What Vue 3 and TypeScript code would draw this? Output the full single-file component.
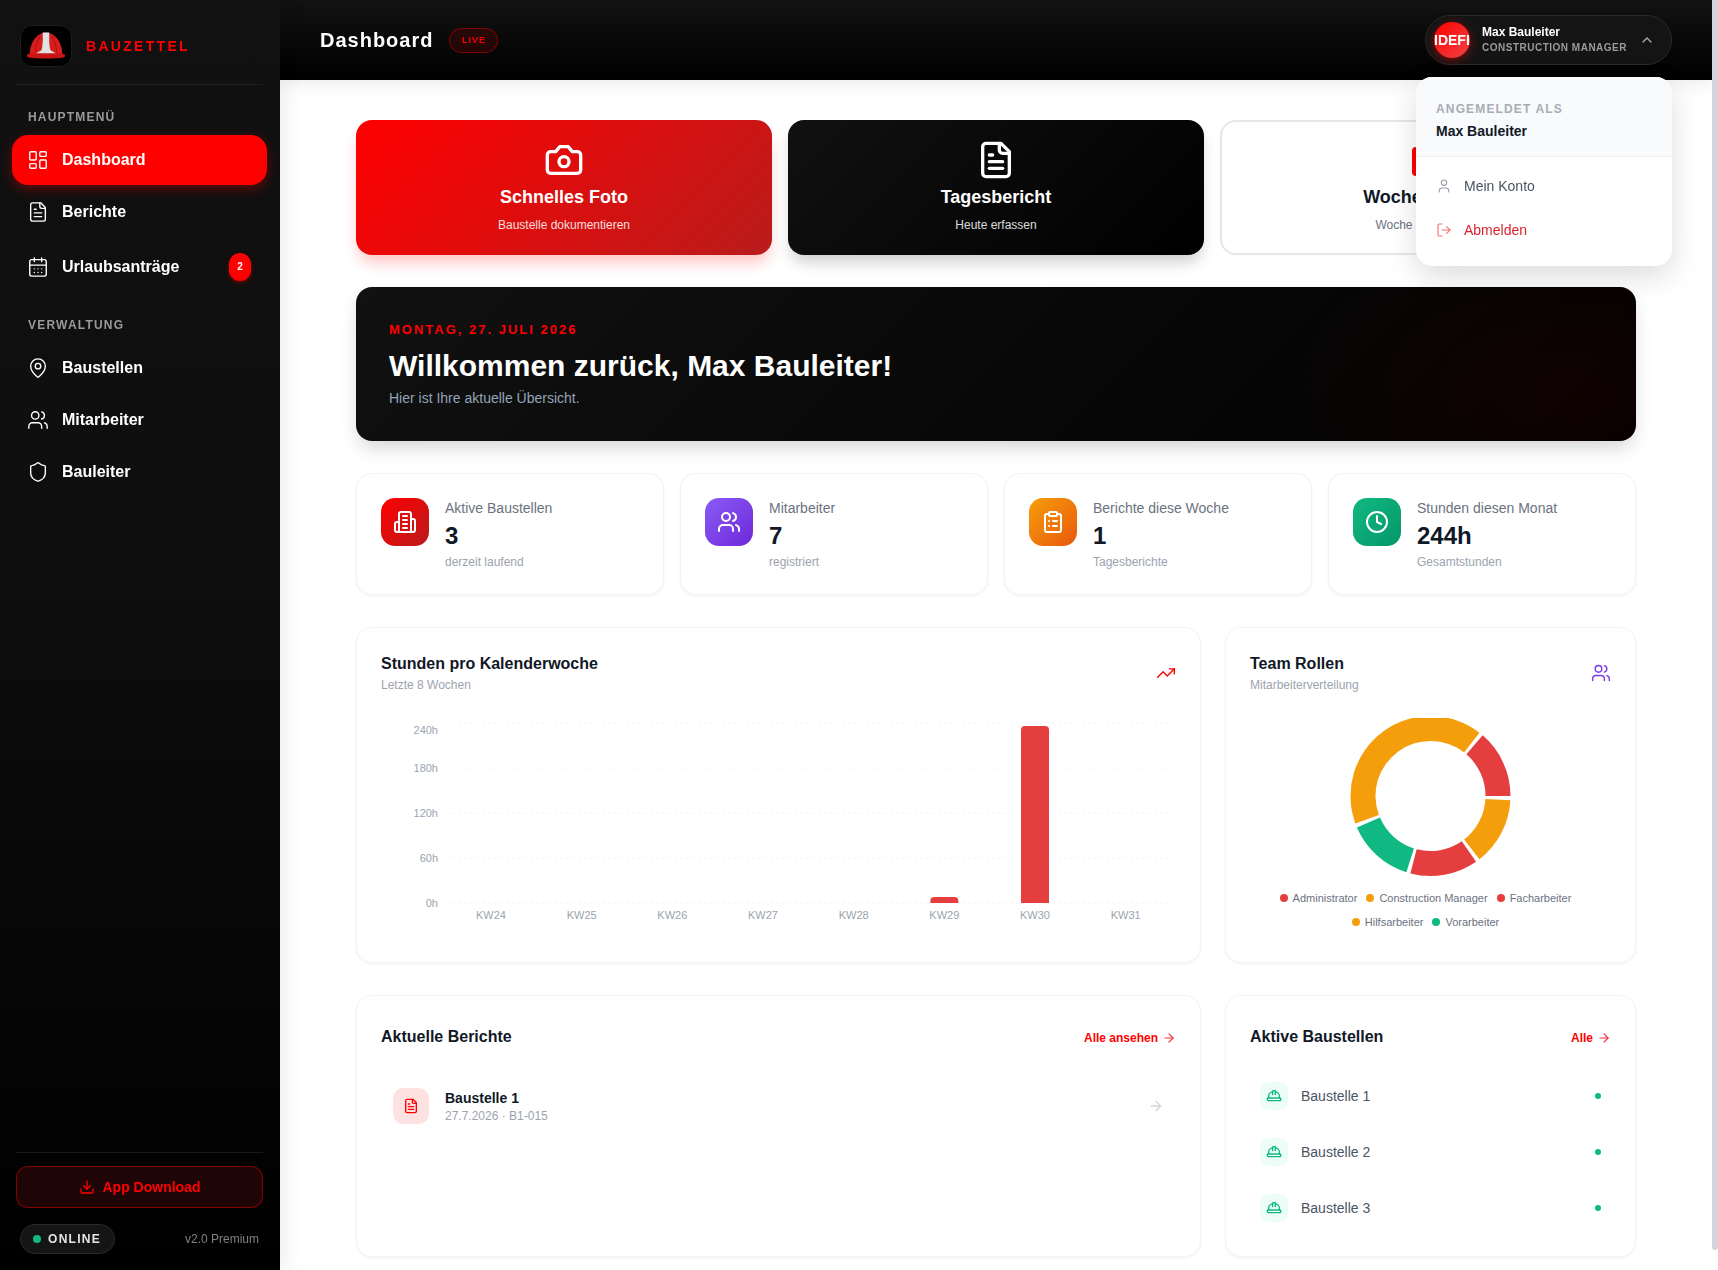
<script setup lang="ts">
import { h, type FunctionalComponent } from 'vue'

const circle = (cx: number, cy: number, r: number) => `M${cx - r} ${cy}a${r} ${r} 0 1 0 ${2 * r} 0a${r} ${r} 0 1 0 ${-2 * r} 0`
const rect = (x: number, y: number, w: number, ht: number, r: number) =>
  `M${x + r} ${y}h${w - 2 * r}a${r} ${r} 0 0 1 ${r} ${r}v${ht - 2 * r}a${r} ${r} 0 0 1 ${-r} ${r}h${-(w - 2 * r)}a${r} ${r} 0 0 1 ${-r} ${-r}v${-(ht - 2 * r)}a${r} ${r} 0 0 1 ${r} ${-r}z`

const icons: Record<string, string[]> = {
  dashboard: [rect(3, 3, 7, 9, 1), rect(14, 3, 7, 5, 1), rect(14, 12, 7, 9, 1), rect(3, 16, 7, 5, 1)],
  file: ['M15 2H6a2 2 0 0 0-2 2v16a2 2 0 0 0 2 2h12a2 2 0 0 0 2-2V7Z', 'M14 2v4a2 2 0 0 0 2 2h4', 'M10 9H8', 'M16 13H8', 'M16 17H8'],
  calendar: ['M8 2v4', 'M16 2v4', rect(3, 4, 18, 18, 2), 'M3 10h18', 'M8 14h.01', 'M12 14h.01', 'M16 14h.01', 'M8 18h.01', 'M12 18h.01', 'M16 18h.01'],
  pin: ['M20 10c0 4.993-5.539 10.193-7.399 11.799a1 1 0 0 1-1.202 0C9.539 20.193 4 14.993 4 10a8 8 0 0 1 16 0', circle(12, 10, 3)],
  users: ['M16 21v-2a4 4 0 0 0-4-4H6a4 4 0 0 0-4 4v2', circle(9, 7, 4), 'M22 21v-2a4 4 0 0 0-3-3.87', 'M16 3.13a4 4 0 0 1 0 7.75'],
  shield: ['M20 13c0 5-3.5 7.5-7.66 8.95a1 1 0 0 1-.67-.01C7.5 20.5 4 18 4 13V6a1 1 0 0 1 1-1c2 0 4.5-1.2 6.24-2.72a1.17 1.17 0 0 1 1.52 0C14.51 3.81 17 5 19 5a1 1 0 0 1 1 1z'],
  download: ['M21 15v4a2 2 0 0 1-2 2H5a2 2 0 0 1-2-2v-4', 'M7 10l5 5 5-5', 'M12 15V3'],
  chevron: ['m18 15-6-6-6 6'],
  camera: ['M14.5 4h-5L7 7H4a2 2 0 0 0-2 2v9a2 2 0 0 0 2 2h16a2 2 0 0 0 2-2V9a2 2 0 0 0-2-2h-3l-2.5-3z', circle(12, 13, 3)],
  user: ['M19 21v-2a4 4 0 0 0-4-4H9a4 4 0 0 0-4 4v2', circle(12, 7, 4)],
  logout: ['M9 21H5a2 2 0 0 1-2-2V5a2 2 0 0 1 2-2h4', 'M16 17l5-5-5-5', 'M21 12H9'],
  building: ['M6 22V4a2 2 0 0 1 2-2h8a2 2 0 0 1 2 2v18Z', 'M6 12H4a2 2 0 0 0-2 2v6a2 2 0 0 0 2 2h2', 'M18 9h2a2 2 0 0 1 2 2v9a2 2 0 0 1-2 2h-2', 'M10 6h4', 'M10 10h4', 'M10 14h4', 'M10 18h4'],
  clipboard: [rect(8, 2, 8, 4, 1), 'M16 4h2a2 2 0 0 1 2 2v14a2 2 0 0 1-2 2H6a2 2 0 0 1-2-2V6a2 2 0 0 1 2-2h2', 'M12 11h4', 'M12 16h4', 'M8 11h.01', 'M8 16h.01'],
  clock: [circle(12, 12, 10), 'M12 6v6l4 2'],
  trending: ['M22 7l-8.5 8.5-5-5L2 17', 'M16 7h6v6'],
  arrow: ['M5 12h14', 'm12 5 7 7-7 7'],
  hardhat: ['M2 18a1 1 0 0 0 1 1h18a1 1 0 0 0 1-1v-2a1 1 0 0 0-1-1H3a1 1 0 0 0-1 1v2z', 'M10 10V5a1 1 0 0 1 1-1h2a1 1 0 0 1 1 1v5', 'M4 15v-3a6 6 0 0 1 6-6', 'M14 6a6 6 0 0 1 6 6v3'],
}

const Ico: FunctionalComponent<{ name: string }> = (props) =>
  h(
    'svg',
    { viewBox: '0 0 24 24', fill: 'none', stroke: 'currentColor', 'stroke-linecap': 'round', 'stroke-linejoin': 'round' },
    icons[props.name].map((d) => h('path', { d })),
  )

const mainNav = [
  { label: 'Dashboard', icon: 'dashboard', active: true },
  { label: 'Berichte', icon: 'file' },
  { label: 'Urlaubsanträge', icon: 'calendar', badge: 2 },
]
const adminNav = [
  { label: 'Baustellen', icon: 'pin' },
  { label: 'Mitarbeiter', icon: 'users' },
  { label: 'Bauleiter', icon: 'shield' },
]

const stats = [
  { label: 'Aktive Baustellen', value: '3', sub: 'derzeit laufend', icon: 'building', tone: 'red' },
  { label: 'Mitarbeiter', value: '7', sub: 'registriert', icon: 'users', tone: 'purple' },
  { label: 'Berichte diese Woche', value: '1', sub: 'Tagesberichte', icon: 'clipboard', tone: 'orange' },
  { label: 'Stunden diesen Monat', value: '244h', sub: 'Gesamtstunden', icon: 'clock', tone: 'green' },
]

const gridLines = [
  { y: 14, ly: 21, label: '240h' },
  { y: 59, ly: 59, label: '180h' },
  { y: 104, ly: 104, label: '120h' },
  { y: 149, ly: 149, label: '60h' },
  { y: 194, ly: 194, label: '0h' },
]
const weeks = [
  { kw: 'KW24', top: 194 },
  { kw: 'KW25', top: 194 },
  { kw: 'KW26', top: 194 },
  { kw: 'KW27', top: 194 },
  { kw: 'KW28', top: 194 },
  { kw: 'KW29', top: 188 },
  { kw: 'KW30', top: 17 },
  { kw: 'KW31', top: 194 },
]
const weekX = (i: number) => 110 + 90.67 * i
const barPath = (cx: number, top: number) => {
  const r = Math.min(4, 194 - top)
  return `M${cx - 14} 194V${top + r}Q${cx - 14} ${top} ${cx - 14 + r} ${top}H${cx + 14 - r}Q${cx + 14} ${top} ${cx + 14} ${top + r}V194Z`
}

// donut runs counter-clockwise from 3 o'clock, 3 degrees between slices
const slices = [
  { share: 1, color: '#e53e3e' },
  { share: 3, color: '#f59e0b' },
  { share: 1, color: '#10b981' },
  { share: 1, color: '#e53e3e' },
  { share: 1, color: '#f59e0b' },
]
const unit = (360 - 3 * slices.length) / 7
const arc = (from: number, to: number) => {
  const [cx, cy, R, r] = [80.5, 78, 80, 55]
  const pt = (rad: number, a: number) => `${(cx + rad * Math.cos((a * Math.PI) / 180)).toFixed(2)} ${(cy - rad * Math.sin((a * Math.PI) / 180)).toFixed(2)}`
  const big = to - from > 180 ? 1 : 0
  return `M${pt(R, from)}A${R} ${R} 0 ${big} 0 ${pt(R, to)}L${pt(r, to)}A${r} ${r} 0 ${big} 1 ${pt(r, from)}Z`
}
let angle = 0
const donut = slices.map((s) => {
  const d = arc(angle, angle + s.share * unit)
  angle += s.share * unit + 3
  return { d, color: s.color }
})
const legend = [
  { label: 'Administrator', color: '#e53e3e' },
  { label: 'Construction Manager', color: '#f59e0b' },
  { label: 'Facharbeiter', color: '#e53e3e' },
  { label: 'Hilfsarbeiter', color: '#f59e0b' },
  { label: 'Vorarbeiter', color: '#10b981' },
]
const sites = ['Baustelle 1', 'Baustelle 2', 'Baustelle 3']
</script>

<template>
  <div class="app">
    <aside class="sidebar">
      <div class="brand">
        <div class="logo">
          <svg viewBox="0 0 52 42" width="52" height="42">
            <path d="M9 30a17 23 0 0 1 34 0z" fill="#d91c1c" />
            <path d="M15 28c0-7 2-13 5-17M37 28c0-7-2-13-5-17" stroke="#a81212" stroke-width="1" fill="none" />
            <path d="M7 29.500c6-1.500 32-1.500 38 0 1.500 1.500 1 3-1 3.500-8 1.500-28 1.500-36 0-2-.5-2.500-2-1-3.500z" fill="#c81414" />
            <path d="M22.500 7h7c-.5 7 0 14 1 18 1 1.500 3.500 2.500 6 3.500H15.500c2.500-1 5-2 6-3.500 1-4 1.500-11 1-18z" fill="#dfe1e3" />
          </svg>
        </div>
        <span class="brand-name">BAUZETTEL</span>
      </div>

      <div class="nav-title first">HAUPTMENÜ</div>
      <nav class="nav tight">
        <a v-for="item in mainNav" :key="item.label" class="nav-item" :class="{ active: item.active }">
          <Ico :name="item.icon" class="nav-icon" />
          <span>{{ item.label }}</span>
          <span v-if="item.badge" class="badge">{{ item.badge }}</span>
        </a>
      </nav>

      <div class="nav-title second">VERWALTUNG</div>
      <nav class="nav">
        <a v-for="item in adminNav" :key="item.label" class="nav-item">
          <Ico :name="item.icon" class="nav-icon" />
          <span>{{ item.label }}</span>
        </a>
      </nav>

      <div class="side-foot">
        <button class="download">
          <Ico name="download" class="download-icon" />
          App Download
        </button>
        <div class="foot-row">
          <span class="online"><i></i>ONLINE</span>
          <span class="version">v2.0 Premium</span>
        </div>
      </div>
    </aside>

    <div class="content">
      <header class="topbar">
        <div class="top-left">
          <h1>Dashboard</h1>
          <span class="live">LIVE</span>
        </div>
        <div class="user-wrap">
          <div class="user-pill">
            <div class="avatar">IDEFI</div>
            <div class="user-text">
              <strong>Max Bauleiter</strong>
              <small>CONSTRUCTION MANAGER</small>
            </div>
            <Ico name="chevron" class="chev" />
          </div>
          <div class="dropdown">
            <div class="drop-head">
              <small>ANGEMELDET ALS</small>
              <strong>Max Bauleiter</strong>
            </div>
            <div class="drop-list">
              <a class="drop-item"><Ico name="user" class="drop-icon muted" />Mein Konto</a>
              <a class="drop-item danger"><Ico name="logout" class="drop-icon" />Abmelden</a>
            </div>
          </div>
        </div>
      </header>

      <main class="main">
        <section class="quick">
          <div class="quick-card red">
            <Ico name="camera" class="quick-icon" />
            <h3>Schnelles Foto</h3>
            <p>Baustelle dokumentieren</p>
          </div>
          <div class="quick-card black">
            <Ico name="file" class="quick-icon" />
            <h3>Tagesbericht</h3>
            <p>Heute erfassen</p>
          </div>
          <div class="quick-card light">
            <div class="quick-block"></div>
            <h3>Wochenbericht</h3>
            <p>Woche abschließen</p>
          </div>
        </section>

        <section class="welcome">
          <div class="welcome-date">MONTAG, 27. JULI 2026</div>
          <h2>Willkommen zurück, Max Bauleiter!</h2>
          <p>Hier ist Ihre aktuelle Übersicht.</p>
        </section>

        <section class="stats">
          <div v-for="s in stats" :key="s.label" class="stat card">
            <div class="stat-icon" :class="s.tone"><Ico :name="s.icon" /></div>
            <div>
              <div class="stat-label">{{ s.label }}</div>
              <div class="stat-value">{{ s.value }}</div>
              <div class="stat-sub">{{ s.sub }}</div>
            </div>
          </div>
        </section>

        <section class="split charts">
          <div class="card panel">
            <div class="panel-head">
              <div>
                <h3>Stunden pro Kalenderwoche</h3>
                <p>Letzte 8 Wochen</p>
              </div>
              <Ico name="trending" class="head-icon red-text" />
            </div>
            <svg class="bars" width="795" height="229">
              <g v-for="g in gridLines" :key="g.label">
                <line x1="65" x2="789" :y1="g.y" :y2="g.y" stroke="#f3f4f6" stroke-dasharray="3 3" />
                <text x="57" :y="g.ly + 3.5" text-anchor="end">{{ g.label }}</text>
              </g>
              <g v-for="(w, i) in weeks" :key="w.kw">
                <path v-if="w.top < 194" :d="barPath(weekX(i), w.top)" fill="#e53e3e" />
                <text :x="weekX(i)" y="210" text-anchor="middle">{{ w.kw }}</text>
              </g>
            </svg>
          </div>

          <div class="card panel">
            <div class="panel-head">
              <div>
                <h3>Team Rollen</h3>
                <p>Mitarbeiterverteilung</p>
              </div>
              <Ico name="users" class="head-icon purple-text" />
            </div>
            <svg class="donut" width="162" height="161">
              <path v-for="(p, i) in donut" :key="i" :d="p.d" :fill="p.color" />
            </svg>
            <div class="legend">
              <span v-for="l in legend" :key="l.label"><i :style="{ background: l.color }"></i>{{ l.label }}</span>
            </div>
          </div>
        </section>

        <section class="split lists">
          <div class="card panel">
            <div class="list-head">
              <h3>Aktuelle Berichte</h3>
              <a class="more">Alle ansehen <Ico name="arrow" class="more-icon" /></a>
            </div>
            <div class="report">
              <div class="report-icon"><Ico name="file" /></div>
              <div class="report-text">
                <strong>Baustelle 1</strong>
                <small>27.7.2026 · B1-015</small>
              </div>
              <Ico name="arrow" class="report-arrow" />
            </div>
          </div>

          <div class="card panel">
            <div class="list-head">
              <h3>Aktive Baustellen</h3>
              <a class="more">Alle <Ico name="arrow" class="more-icon" /></a>
            </div>
            <div class="sites">
              <div v-for="site in sites" :key="site" class="site">
                <div class="site-icon"><Ico name="hardhat" /></div>
                <span>{{ site }}</span>
                <i class="site-dot"></i>
              </div>
            </div>
          </div>
        </section>
      </main>
    </div>

    <div class="scrollbar"><div class="thumb"></div></div>
  </div>
</template>

<style>
html {
  background: #fff;
}
</style>

<style scoped>
* {
  box-sizing: border-box;
}
.app {
  display: flex;
  height: 100vh;
  overflow: hidden;
  font-family: "Liberation Sans", Arial, sans-serif;
  color: #111827;
}
h1, h2, h3, p {
  margin: 0;
}
.scrollbar {
  flex: 0 0 6px;
  position: relative;
  z-index: 40;
  background: #fff;
}
.thumb {
  height: 1250px;
  border-radius: 0 0 3px 3px;
  background: #d1d5db;
}

/* sidebar */
.sidebar {
  position: relative;
  z-index: 30;
  flex: 0 0 280px;
  height: 100vh;
  display: flex;
  flex-direction: column;
  padding: 25px 13px 0 12px;
  background: linear-gradient(180deg, #111 0%, #0e0e0e 45%, #000 100%);
  box-shadow: 4px 0 20px rgba(0, 0, 0, 0.08);
}
.brand {
  display: flex;
  align-items: center;
  gap: 14px;
  margin: 0 4px;
  padding: 0 4px 17px;
  border-bottom: 1px solid #1f1f1f;
}
.logo {
  width: 52px;
  height: 42px;
  border-radius: 12px;
  background: #000;
  border: 1px solid #1c1c1c;
  display: flex;
  align-items: center;
  justify-content: center;
}
.brand-name {
  color: #f00;
  font-size: 14px;
  font-weight: 700;
  letter-spacing: 2.3px;
}
.nav-title {
  padding-left: 16px;
  color: #9a9a9a;
  font-size: 12px;
  font-weight: 700;
  letter-spacing: 1.2px;
  line-height: 14px;
}
.nav-title.first {
  margin-top: 25px;
  margin-bottom: 11px;
}
.nav-title.second {
  margin-top: 23px;
  margin-bottom: 12px;
}
.nav {
  display: flex;
  flex-direction: column;
  gap: 4px;
}
.nav.tight {
  gap: 3px;
}
.nav-item {
  display: flex;
  align-items: center;
  gap: 13px;
  min-height: 48px;
  padding: 0 15px;
  border-radius: 16px;
  color: #fff;
  font-size: 16px;
  font-weight: 700;
}
.nav-item.active {
  min-height: 50px;
  background: #f00;
  box-shadow: 0 4px 12px rgba(255, 0, 0, 0.35);
}
.nav-icon {
  width: 22px;
  height: 22px;
  stroke-width: 1.5;
  flex: none;
}
.badge {
  margin: 14px 1px 14px auto;
  width: 22px;
  height: 28px;
  border-radius: 11px;
  background: #f00;
  box-shadow: 0 2px 4px rgba(255, 0, 0, 0.35);
  font-size: 10px;
  line-height: 28px;
  text-align: center;
}
.side-foot {
  margin-top: auto;
  margin-inline: 4px;
  padding-top: 13px;
  padding-bottom: 16px;
  border-top: 1px solid #1a1a1a;
}
.download {
  width: 100%;
  height: 42px;
  display: flex;
  align-items: center;
  justify-content: center;
  gap: 8px;
  border: 1px solid rgba(255, 0, 0, 0.45);
  border-radius: 12px;
  background: #1f0505;
  color: #f00;
  font-family: inherit;
  font-size: 14px;
  font-weight: 700;
}
.download-icon {
  width: 16px;
  height: 16px;
  stroke-width: 2;
}
.foot-row {
  display: flex;
  align-items: center;
  justify-content: space-between;
  margin-top: 16px;
  padding: 0 4px;
}
.online {
  display: flex;
  align-items: center;
  gap: 7px;
  height: 30px;
  padding: 0 13px 0 12px;
  border: 1px solid #2a2a2a;
  border-radius: 15px;
  background: #151515;
  color: #e5e5e5;
  font-size: 12px;
  font-weight: 700;
  letter-spacing: 1.3px;
}
.online i {
  width: 8px;
  height: 8px;
  border-radius: 50%;
  background: #10b981;
}
.version {
  color: #808080;
  font-size: 12px;
}

/* top bar stays put while the content column scrolls */
.content {
  flex: 1;
  min-width: 0;
  height: 100vh;
  overflow-y: auto;
  scrollbar-width: none;
}
.topbar {
  position: sticky;
  top: 0;
  z-index: 20;
  height: 80px;
  display: flex;
  align-items: center;
  justify-content: space-between;
  padding: 0 40px;
  background: linear-gradient(180deg, #121212 0%, #000 100%);
  box-shadow: 0 4px 16px rgba(0, 0, 0, 0.08);
}
.top-left {
  display: flex;
  align-items: center;
  gap: 16px;
}
.topbar h1 {
  color: #fff;
  font-size: 20px;
  font-weight: 700;
  letter-spacing: 1px;
}
.live {
  width: 49px;
  height: 25px;
  border-radius: 13px;
  border: 1px solid rgba(255, 0, 0, 0.4);
  background: rgba(255, 0, 0, 0.12);
  color: #f00;
  font-size: 9px;
  font-weight: 700;
  letter-spacing: 1px;
  line-height: 23px;
  text-align: center;
}
.user-wrap {
  position: relative;
}
.user-pill {
  width: 247px;
  height: 50px;
  display: flex;
  align-items: center;
  padding: 0 16px 0 8px;
  border: 1px solid #2a2a2a;
  border-radius: 25px;
  background: #141414;
}
.avatar {
  width: 36px;
  height: 36px;
  flex: none;
  border-radius: 50%;
  background: linear-gradient(135deg, #f00, #ef4444);
  box-shadow: 0 2px 10px rgba(255, 0, 0, 0.5);
  color: #fff;
  font-size: 14px;
  font-weight: 700;
  line-height: 36px;
  white-space: nowrap;
  overflow: hidden;
}
.user-text {
  display: flex;
  flex-direction: column;
  margin-left: 12px;
  padding-bottom: 2px;
  flex: 1;
}
.user-text strong {
  color: #fff;
  font-size: 12px;
  line-height: 16px;
}
.user-text small {
  color: #9a9a9a;
  font-size: 10px;
  font-weight: 700;
  letter-spacing: 0.5px;
  line-height: 15px;
}
.chev {
  width: 16px;
  height: 16px;
  stroke-width: 2;
  color: #aaa;
}
.dropdown {
  position: absolute;
  top: 62px;
  right: 0;
  width: 256px;
  height: 189px;
  border-radius: 16px;
  background: #fff;
  box-shadow: 0 10px 30px rgba(0, 0, 0, 0.14);
  overflow: hidden;
}
.drop-head {
  height: 80px;
  padding: 24px 20px 0;
  background: #f9fafb;
  border-bottom: 1px solid #f0f1f3;
  display: flex;
  flex-direction: column;
}
.drop-head small {
  color: #a8acb5;
  font-size: 12px;
  font-weight: 700;
  letter-spacing: 1.15px;
  line-height: 16px;
}
.drop-head strong {
  margin-top: 6px;
  color: #111827;
  font-size: 14px;
  line-height: 16px;
}
.drop-list {
  padding: 7px 0;
}
.drop-item {
  display: flex;
  align-items: center;
  gap: 12px;
  height: 44px;
  padding: 0 20px;
  color: #4b5563;
  font-size: 14px;
}
.drop-item.danger {
  color: #dc1f2e;
}
.drop-icon {
  width: 16px;
  height: 16px;
  stroke-width: 1.7;
}
.drop-icon.muted {
  color: #9ca3af;
}
.danger .drop-icon {
  color: #f87171;
}

/* main column */
.main {
  max-width: 1280px;
  margin: 0 auto;
  padding: 40px 0 32px;
  display: flex;
  flex-direction: column;
}
.quick {
  display: grid;
  grid-template-columns: repeat(3, 1fr);
  gap: 16px;
}
.quick-card {
  height: 135px;
  border-radius: 16px;
  padding-top: 20px;
  display: flex;
  flex-direction: column;
  align-items: center;
  text-align: center;
}
.quick-card.red {
  background: linear-gradient(135deg, #f00 0%, #b91c1c 100%);
  color: #fff;
  box-shadow: 0 10px 15px -3px rgba(255, 0, 0, 0.25);
}
.quick-card.black {
  background: linear-gradient(135deg, #111 0%, #000 100%);
  color: #fff;
  box-shadow: 0 10px 15px -3px rgba(0, 0, 0, 0.2);
}
.quick-card.light {
  background: #fff;
  border: 2px solid #e5e7eb;
  padding-top: 18px;
  color: #111827;
}
.quick-icon {
  width: 40px;
  height: 40px;
  stroke-width: 2;
}
.quick-block {
  width: 32px;
  height: 29px;
  margin-top: 7px;
  margin-bottom: 4px;
  border-radius: 4px;
  background: #f00;
}
.quick-card h3 {
  margin-top: 3px;
  font-size: 18px;
  line-height: 28px;
  font-weight: 700;
}
.quick-card p {
  margin-top: 6px;
  font-size: 12px;
  line-height: 16px;
  opacity: 0.85;
}
.quick-card.light p {
  color: #6b7280;
  opacity: 1;
}
.welcome {
  margin-top: 32px;
  height: 154px;
  padding: 33px 33px 0;
  border-radius: 16px;
  background:
    radial-gradient(ellipse 300px 180px at 95% 70%, rgba(150, 0, 0, 0.1), transparent 100%),
    linear-gradient(135deg, #111 0%, #000 100%);
  box-shadow: 0 10px 20px -4px rgba(0, 0, 0, 0.18);
}
.welcome-date {
  color: #f00;
  font-size: 13px;
  font-weight: 700;
  letter-spacing: 2px;
  line-height: 20px;
}
.welcome h2 {
  margin-top: 8px;
  color: #fff;
  font-size: 30px;
  line-height: 36px;
  font-weight: 700;
}
.welcome p {
  margin-top: 4px;
  color: #94a3b8;
  font-size: 14px;
  line-height: 20px;
}
.card {
  background: #fff;
  border: 1px solid #f3f4f6;
  border-radius: 16px;
  box-shadow: 0 1px 3px rgba(0, 0, 0, 0.05);
}
.stats {
  margin-top: 32px;
  display: grid;
  grid-template-columns: repeat(4, 1fr);
  grid-auto-rows: 122px;
  gap: 16px;
}
.stat {
  display: flex;
  gap: 16px;
  padding: 24px;
}
.stat-icon {
  width: 48px;
  height: 48px;
  flex: none;
  border-radius: 14px;
  display: flex;
  align-items: center;
  justify-content: center;
  color: #fff;
}
.stat-icon svg {
  width: 24px;
  height: 24px;
  stroke-width: 2;
}
.stat-icon.red {
  background: linear-gradient(135deg, #f00, #b91c1c);
}
.stat-icon.purple {
  background: linear-gradient(135deg, #8b5cf6, #6d28d9);
}
.stat-icon.orange {
  background: linear-gradient(135deg, #f59e0b, #ea580c);
}
.stat-icon.green {
  background: linear-gradient(135deg, #10b981, #059669);
}
.stat-label {
  color: #6b7280;
  font-size: 14px;
  line-height: 20px;
}
.stat-value {
  margin-top: 2px;
  color: #111827;
  font-size: 24px;
  font-weight: 700;
  line-height: 32px;
}
.stat-sub {
  margin-top: 2px;
  color: #9ca3af;
  font-size: 12px;
  line-height: 16px;
}
.split {
  display: grid;
  grid-template-columns: 1fr 411px;
  gap: 24px;
}
.charts {
  margin-top: 32px;
  grid-auto-rows: 336px;
}
.lists {
  margin-top: 32px;
  grid-auto-rows: 262px;
}
.panel {
  padding: 24px;
}
.panel-head {
  display: flex;
  justify-content: space-between;
  align-items: flex-start;
}
.panel h3 {
  font-size: 16px;
  line-height: 24px;
  font-weight: 700;
  color: #111827;
}
.panel-head p {
  margin-top: 1px;
  color: #9ca3af;
  font-size: 12px;
  line-height: 16px;
}
.head-icon {
  width: 20px;
  height: 20px;
  margin-top: 11px;
  stroke-width: 1.7;
}
.red-text {
  color: #f00;
}
.purple-text {
  color: #7c3aed;
}
.bars {
  display: block;
  margin-top: 16px;
}
.bars text {
  fill: #9ca3af;
  font-size: 11px;
}
.donut {
  display: block;
  margin: 25px auto 0;
}
.legend {
  display: flex;
  flex-wrap: wrap;
  justify-content: center;
  gap: 8px 9px;
  margin: 11px 10px 0 0;
  color: #6b7280;
  font-size: 11px;
  line-height: 16px;
}
.legend span {
  display: flex;
  align-items: center;
  gap: 5px;
}
.legend i {
  width: 8px;
  height: 8px;
  border-radius: 50%;
}
.list-head {
  display: flex;
  align-items: center;
  justify-content: space-between;
  height: 34px;
}
.more {
  display: flex;
  align-items: center;
  gap: 4px;
  margin-top: 2px;
  color: #f00;
  font-size: 12px;
  font-weight: 700;
}
.more-icon {
  width: 14px;
  height: 14px;
  stroke-width: 2;
  color: #f6323e;
}
.report {
  display: flex;
  align-items: center;
  margin-top: 22px;
  padding: 12px;
}
.report-icon {
  width: 36px;
  height: 36px;
  border-radius: 10px;
  background: #fee2e2;
  color: #f00;
  display: flex;
  align-items: center;
  justify-content: center;
}
.report-icon svg {
  width: 16px;
  height: 16px;
  stroke-width: 2;
}
.report-text {
  flex: 1;
  margin-left: 16px;
  display: flex;
  flex-direction: column;
}
.report-text strong {
  font-size: 14px;
  line-height: 18px;
}
.report-text small {
  margin-top: 1px;
  color: #9ca3af;
  font-size: 12px;
  line-height: 16px;
}
.report-arrow {
  width: 16px;
  height: 16px;
  stroke-width: 2;
  color: #d1d5db;
}
.sites {
  margin-top: 14px;
}
.site {
  height: 56px;
  display: flex;
  align-items: center;
  padding: 0 10px;
  color: #4b5563;
  font-size: 14px;
}
.site-icon {
  width: 28px;
  height: 28px;
  margin-right: 13px;
  border-radius: 8px;
  background: #ecfdf5;
  color: #10b981;
  display: flex;
  align-items: center;
  justify-content: center;
}
.site-icon svg {
  width: 16px;
  height: 16px;
  stroke-width: 2;
}
.site-dot {
  width: 6px;
  height: 6px;
  margin-left: auto;
  border-radius: 50%;
  background: #10b981;
}
</style>
